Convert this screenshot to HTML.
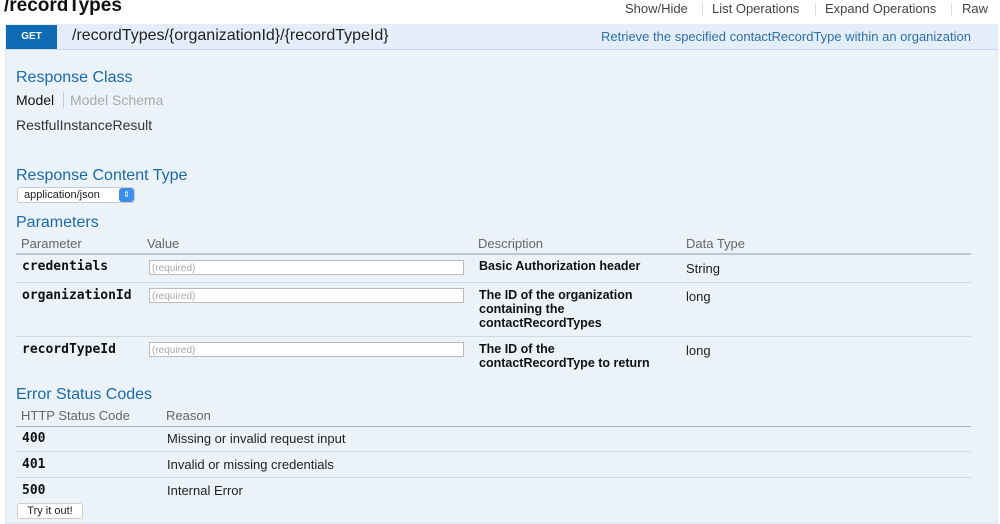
<!DOCTYPE html>
<html><head><meta charset="utf-8"><style>
*{margin:0;padding:0;box-sizing:border-box}
body{width:1000px;height:524px;background:#fff;font-family:"Liberation Sans",sans-serif;position:relative;overflow:hidden;color:#222}
.a{position:absolute;white-space:nowrap}
.h{color:#1a6aa8;font-size:16px}
.th{color:#666;font-size:13px}
.mono{font-family:"DejaVu Sans Mono","Liberation Mono",monospace;font-weight:bold;font-size:13px;color:#111}
.b{font-weight:bold;font-size:12.5px;color:#111;line-height:14px}
.line{position:absolute;left:16px;width:955px;height:1px;background:#d0d8e0}
.inp{position:absolute;left:149px;width:315px;height:15px;background:#fff;border:1px solid #bbb;font-size:10px;color:#aaa;padding-left:2px;line-height:15px}
</style></head><body>
<div class="a" style="left:4px;top:-5px;font-size:19px;font-weight:bold;color:#111">/recordTypes</div>
<div class="a" style="left:625px;top:1px;font-size:13px;color:#444">Show/Hide</div>
<div class="a" style="left:702px;top:3px;width:1px;height:13px;background:#ddd"></div>
<div class="a" style="left:712px;top:1px;font-size:13px;color:#444">List Operations</div>
<div class="a" style="left:815px;top:3px;width:1px;height:13px;background:#ddd"></div>
<div class="a" style="left:825px;top:1px;font-size:13px;color:#444">Expand Operations</div>
<div class="a" style="left:951px;top:3px;width:1px;height:13px;background:#ddd"></div>
<div class="a" style="left:962px;top:1px;font-size:13px;color:#444">Raw</div>
<div class="a" style="left:5px;top:24px;width:993px;height:500px;background:#ebf3f9;border:1px solid #dbe6f0"></div>
<div class="a" style="left:5px;top:24px;width:993px;height:26px;background:#e4eef8;border-bottom:1px solid #c8d8e8"></div>
<div class="a" style="left:6px;top:25px;width:51px;height:24px;background:#0f6ab4;color:#fff;font-size:10px;font-weight:bold;text-align:center;line-height:24px">GET</div>
<div class="a" style="left:72px;top:27px;font-size:16px;color:#222">/recordTypes/{organizationId}/{recordTypeId}</div>
<div class="a" style="left:601px;top:29px;font-size:13px;color:#2f6fa8">Retrieve the specified contactRecordType within an organization</div>
<div class="a h" style="left:16px;top:69px">Response Class</div>
<div class="a" style="left:16px;top:92px;font-size:14px;color:#111">Model</div>
<div class="a" style="left:63px;top:92px;width:1px;height:16px;background:#ccc"></div>
<div class="a" style="left:70px;top:92px;font-size:14px;color:#aaa">Model Schema</div>
<div class="a" style="left:16px;top:117px;font-size:14px;color:#333">RestfulInstanceResult</div>
<div class="a h" style="left:16px;top:167px">Response Content Type</div>
<div class="a" style="left:17px;top:187px;width:118px;height:16px;background:#fff;border:1px solid #ccc;border-radius:3px;font-size:11px;line-height:14px;padding-left:6px">application/json</div>
<div class="a" style="left:119px;top:188px;width:15px;height:14px;background:#3b8fe8;border-radius:3px;color:#fff;font-size:8px;text-align:center;line-height:14px">⇕</div>
<div class="a h" style="left:16px;top:214px">Parameters</div>
<div class="a th" style="left:21px;top:236px">Parameter</div>
<div class="a th" style="left:147px;top:236px">Value</div>
<div class="a th" style="left:478px;top:236px">Description</div>
<div class="a th" style="left:686px;top:236px">Data Type</div>
<div class="line" style="top:253px;height:2px;background:#bcc6d0"></div>
<div class="a mono" style="left:22px;top:259px">credentials</div>
<div class="inp" style="top:260px">(required)</div>
<div class="a b" style="left:479px;top:259px">Basic Authorization header</div>
<div class="a" style="left:686px;top:261px;font-size:13px">String</div>
<div class="line" style="top:282px"></div>
<div class="a mono" style="left:22px;top:288px">organizationId</div>
<div class="inp" style="top:288px">(required)</div>
<div class="a b" style="left:479px;top:288px">The ID of the organization<br>containing the<br>contactRecordTypes</div>
<div class="a" style="left:686px;top:289px;font-size:13px">long</div>
<div class="line" style="top:336px"></div>
<div class="a mono" style="left:22px;top:342px">recordTypeId</div>
<div class="inp" style="top:342px">(required)</div>
<div class="a b" style="left:479px;top:342px">The ID of the<br>contactRecordType to return</div>
<div class="a" style="left:686px;top:343px;font-size:13px">long</div>
<div class="a h" style="left:16px;top:386px">Error Status Codes</div>
<div class="a th" style="left:21px;top:408px">HTTP Status Code</div>
<div class="a th" style="left:166px;top:408px">Reason</div>
<div class="line" style="top:426px;background:#aab4be"></div>
<div class="a mono" style="left:22px;top:431px">400</div>
<div class="a" style="left:167px;top:431px;font-size:13px">Missing or invalid request input</div>
<div class="line" style="top:451px"></div>
<div class="a mono" style="left:22px;top:457px">401</div>
<div class="a" style="left:167px;top:457px;font-size:13px">Invalid or missing credentials</div>
<div class="line" style="top:477px"></div>
<div class="a mono" style="left:22px;top:483px">500</div>
<div class="a" style="left:167px;top:483px;font-size:13px">Internal Error</div>
<div class="a" style="left:17px;top:503px;width:66px;height:16px;background:#fff;border:1px solid #ccc;border-radius:3px;font-size:11px;line-height:14px;text-align:center">Try it out!</div>
</body></html>
